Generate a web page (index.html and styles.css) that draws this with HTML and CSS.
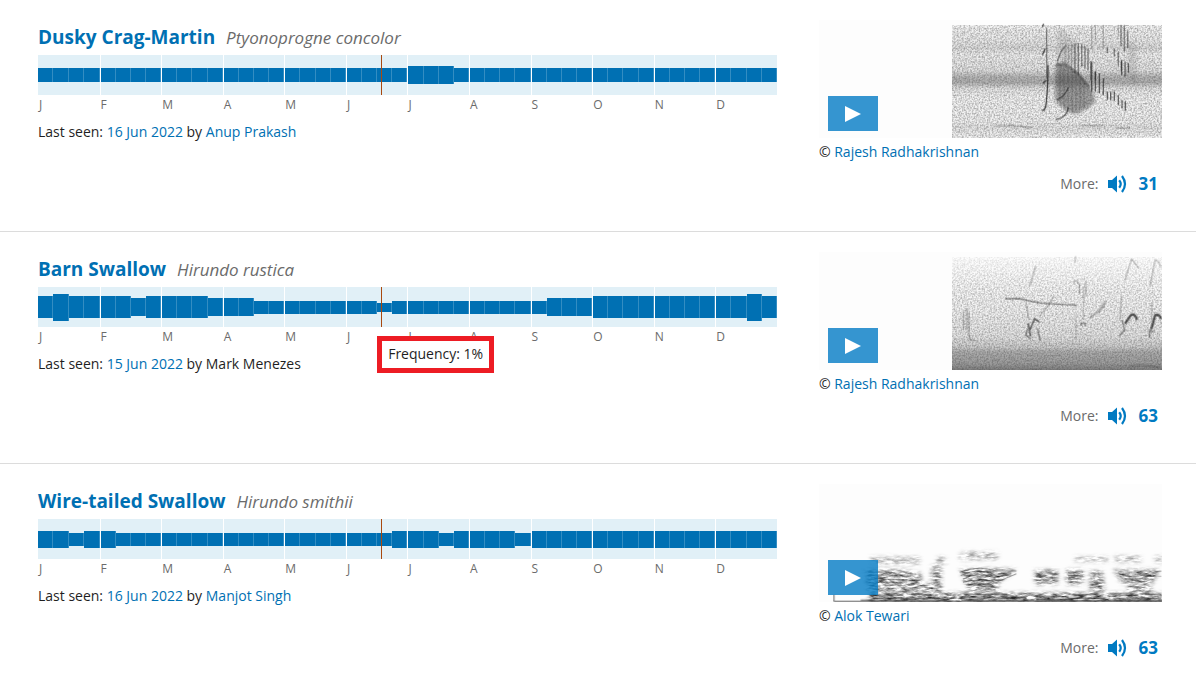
FILE: index.html
```html
<!DOCTYPE html>
<html lang="en">
<head>
<meta charset="utf-8">
<meta name="viewport" content="width=device-width, initial-scale=1">
<title>Swallows</title>
<link rel="stylesheet" href="styles.css">
</head>
<body>
<svg class="defs" width="0" height="0" aria-hidden="true">
  <defs>
    <filter id="grain" x="0" y="0" width="100%" height="100%" color-interpolation-filters="sRGB">
      <feTurbulence type="fractalNoise" baseFrequency="0.6" numOctaves="2" seed="4"/>
      <feColorMatrix values="0 0 0 0 .25  0 0 0 0 .25  0 0 0 0 .25  .9 0 0 0 -.31"/>
      <feComposite operator="in" in2="SourceGraphic"/>
    </filter>
    <filter id="streak" x="0" y="0" width="343" height="118" filterUnits="userSpaceOnUse" color-interpolation-filters="sRGB">
      <feGaussianBlur in="SourceGraphic" stdDeviation="2" result="shape"/>
      <feTurbulence type="fractalNoise" baseFrequency="0.12 0.45" numOctaves="3" seed="9"/>
      <feColorMatrix values="0 0 0 0 .15  0 0 0 0 .15  0 0 0 0 .15  2 0 0 0 -.6"/>
      <feComposite operator="in" in2="shape"/>
    </filter>
    <filter id="soft"><feGaussianBlur stdDeviation="4"/></filter>
    <filter id="trace"><feGaussianBlur stdDeviation="1.2"/></filter>
    <linearGradient id="bands" x1="0" y1="0" x2="0" y2="1">
      <stop offset="0" stop-opacity=".03"/>
      <stop offset=".15" stop-opacity=".08"/>
      <stop offset=".2" stop-opacity=".13"/>
      <stop offset=".26" stop-opacity=".06"/>
      <stop offset=".4" stop-opacity=".1"/>
      <stop offset=".46" stop-opacity=".28"/>
      <stop offset=".51" stop-opacity=".3"/>
      <stop offset=".56" stop-opacity=".1"/>
      <stop offset=".64" stop-opacity=".04"/>
      <stop offset=".86" stop-opacity=".05"/>
      <stop offset=".9" stop-opacity=".1"/>
      <stop offset="1" stop-opacity=".03"/>
    </linearGradient>
    <linearGradient id="floor" x1="0" y1="0" x2="0" y2="1">
      <stop offset="0" stop-opacity="0"/>
      <stop offset=".5" stop-opacity=".05"/>
      <stop offset=".7" stop-opacity=".1"/>
      <stop offset=".8" stop-opacity=".2"/>
      <stop offset=".84" stop-opacity=".32"/>
      <stop offset=".94" stop-opacity=".38"/>
      <stop offset="1" stop-opacity=".5"/>
    </linearGradient>
    <linearGradient id="fade" x1="0" y1="0" x2="0" y2="1">
      <stop offset="0" stop-opacity=".3"/>
      <stop offset=".3" stop-opacity=".85"/>
      <stop offset="1" stop-opacity="1"/>
    </linearGradient>
    <symbol id="speaker" viewBox="0 0 20 20">
      <path d="M1 6h4l5-4.500v17L5 14H1z" fill="currentColor"/>
      <path d="M12.200 6.200q3 3.800 0 7.600M15 2q6 8 0 16" fill="none" stroke="currentColor" stroke-width="2.200"/>
    </symbol>
  </defs>
</svg>

<main>
<ul class="species-list">
  <li class="species">
    <div class="details">
      <h2 class="name"><a href="#dusky">Dusky Crag-Martin</a> <em>Ptyonoprogne concolor</em></h2>
      <div class="chart" data-weeks="14*24 18*3 14*21"></div>
      <p class="seen">Last seen: <a href="#c1">16 Jun 2022</a> by <a href="#u1">Anup Prakash</a></p>
    </div>
    <div class="media">
      <div class="clip">
        <svg class="spectrogram" viewBox="0 0 343 118" aria-hidden="true">
          <rect width="343" height="118" fill="#fdfdfd"/>
          <rect x="133" y="5" width="210" height="113" fill="url(#bands)"/>
          <rect x="133" y="5" width="210" height="113" filter="url(#grain)"/>
          <g transform="translate(131 0) scale(.3333)" fill="none" stroke="#222" stroke-width="4" filter="url(#trace)">
            <path filter="url(#soft)" d="M317 130h30l40 32 38 45 12 38-32 25-30 12-30-12-30-30z" fill="#333" stroke="none" opacity=".42"/>
            <path filter="url(#soft)" d="M322 20v115h60V70L340 30zM535 60v110l25 30V80z" fill="#555" stroke="none" opacity=".15"/>
            <path d="M318 134h30l36 28 34 40" stroke-width="9" opacity=".3"/>
            <path d="M290 24v150" opacity=".5"/>
            <path d="M294 135q0 60-5 110-2 30-14 25M277 104l9-18M278 190l12-10M277 20l4-8" opacity=".8"/>
            <path d="M317 300q34-8 38-38M320 240q26-12 35-38" opacity=".65"/>
            <path d="M322 125q8-32 26-50" opacity=".45"/>
            <path d="M330 140v120M342 140v130M354 145v130M366 155v120M378 165v105M390 175v90M402 190v75" opacity=".2"/>
            <path d="M345 80v50M355 75v55M365 72v80M425 15v70M436 15v45M460 15v70M505 15v35" opacity=".25"/>
            <path d="M375 70v90M385 70v95M395 72v68M405 80v65M414 85v65M505 95v45M513 15v65M523 15v80M533 30v55M472 82v18M493 85v25" opacity=".5"/>
            <path d="M425 125v90M436 155v60M448 160v60M460 175v50M472 215v25M482 215v25M493 215v28M505 225v30M516 240v25M526 243v29M515 120v45M525 125v45M535 130v28" opacity=".68"/>
            <path d="M422 125v55M436 153v28M514 123v30" opacity=".5"/>
            <path d="M135 317h40l12-3M188 315l12 5 15-2 10 3h20M390 316h70M500 324h40" stroke-width="3" opacity=".35"/>
          </g>
        </svg>
        <button class="play" type="button" aria-label="Play recording"><svg viewBox="0 0 16 16"><path d="M0 0l16 8-16 8z"/></svg></button>
      </div>
      <p class="credit">© <a href="#p1">Rajesh Radhakrishnan</a></p>
      <p class="more">More: <a href="#m1"><svg class="speaker"><use href="#speaker"/></svg>31</a></p>
    </div>
  </li>

  <li class="species">
    <div class="details">
      <h2 class="name"><a href="#barn">Barn Swallow</a> <em>Hirundo rustica</em></h2>
      <div class="chart" data-weeks="22 27 22*4 18 22*4 18*3 13*8 9 13*10 18*3 22*10 27 22"><div class="tooltip" role="tooltip">Frequency: 1%</div></div>
      <p class="seen">Last seen: <a href="#c2">15 Jun 2022</a> by Mark Menezes</p>
    </div>
    <div class="media">
      <div class="clip">
        <svg class="spectrogram" viewBox="0 0 343 118" aria-hidden="true">
          <rect width="343" height="118" fill="#fdfdfd"/>
          <rect x="133" y="5" width="210" height="113" fill="url(#floor)"/>
          <rect x="133" y="5" width="210" height="113" fill="url(#fade)" filter="url(#grain)"/>
          <g transform="translate(131 1) scale(.3333)" fill="none" stroke="#222" stroke-width="4" stroke-linejoin="round" filter="url(#trace)">
            <path d="M165 137h45q30 8 70 14l100 6" opacity=".5"/>
            <path d="M268 190l30-37 15-28M257 38l-18 62M525 80l20-62 22 28M600 100l15-78q8-5 18 20M228 150l8 50M377 10l-3 20M515 130l-5 70M605 150v50" stroke-width="3" opacity=".35"/>
            <path d="M418 196l30-24 20-28M445 178l18-20" stroke-width="6" opacity=".3"/>
            <path d="M238 235l16-38 14 10M234 210l8 40" stroke-width="5" opacity=".65"/>
            <path d="M525 212l18-26q5-5 13 3 4 4 4 12M604 228l11-40q4-6 13 0 4 4 5 10" stroke-width="7" opacity=".75"/>
            <path d="M262 225l9 38M232 228l-4 18 14 12M508 250l16-20-8-28M599 255v-25l12 8M394 218v-8h12v10" opacity=".5"/>
            <path d="M40 175v55M50 165v65M56 180v60l4 20 12 2M368 90l10-8 8 12M388 90v35M407 85v45" opacity=".3"/>
            <path d="M400 100v100M378 180v80M130 322h18M540 338h60l30 6" opacity=".2"/>
          </g>
        </svg>
        <button class="play" type="button" aria-label="Play recording"><svg viewBox="0 0 16 16"><path d="M0 0l16 8-16 8z"/></svg></button>
      </div>
      <p class="credit">© <a href="#p2">Rajesh Radhakrishnan</a></p>
      <p class="more">More: <a href="#m2"><svg class="speaker"><use href="#speaker"/></svg>63</a></p>
    </div>
  </li>

  <li class="species">
    <div class="details">
      <h2 class="name"><a href="#wire">Wire-tailed Swallow</a> <em>Hirundo smithii</em></h2>
      <div class="chart" data-weeks="17*2 13 17*2 13*18 17*3 13 17*4 13 17*16"></div>
      <p class="seen">Last seen: <a href="#c3">16 Jun 2022</a> by <a href="#u3">Manjot Singh</a></p>
    </div>
    <div class="media">
      <div class="clip">
        <svg class="spectrogram" viewBox="0 0 343 118" aria-hidden="true">
          <rect width="343" height="118" fill="#fdfdfd"/>
          <g filter="url(#streak)">
            <g transform="translate(-1 59) scale(.3333)">
              <path d="M155 42h150v22H165zM355 42h30v22h-30zM425 28h115v22H425zM770 42h100v14H770zM890 40h80v18h-80zM1010 40h22v20h-22z" opacity=".5"/>
              <path d="M140 82h120l50 10v30H200l60 20H150zM340 70h30v60h-30zM425 78h170l-60 50h-90zM650 82h70v42h-70zM745 80h50v44h-50zM815 85h40v50h-40zM885 80h140l-20 40H910z" opacity=".9"/>
              <path d="M240 122h130v25H160zM450 125h90v22h-90zM820 120h40v25h-40zM930 125h70v22h-70z" opacity=".9"/>
            </g>
          </g>
          <g filter="url(#streak)">
            <path d="M50 109h293v9H50z"/>
          </g>
          <g transform="translate(-1 59) scale(.3333)" fill="none" stroke="#222" stroke-width="3" filter="url(#trace)">
            <path d="M425 88q55-22 110-4h60M428 98q50-24 100-4l50-4M435 108q45-24 90-4l55-12M435 118q50-14 100 0l60-26M445 126q50-8 80 2" opacity=".45"/>
            <path d="M150 88h70l30 8M155 98h70M155 108h55l20 12M655 92h60M655 102h50M750 88h45M750 98h45M750 108h40M900 90q40 20 100-4M905 102q50 16 95-6M910 114q40 10 90-4M1010 85h20M1005 100h25" opacity=".35"/>
            <path d="M48 155v20" opacity=".7"/>
            <path d="M48 175h984" stroke-width="4" opacity=".65"/>
            <path d="M155 156h100M280 154h60M165 166h215M438 154h130M425 164h200M665 160h60M655 168h110M765 154h70M750 165h110M900 156h60M980 154h50M885 166h145" stroke-width="4" opacity=".6"/>
            <path d="M128 171h255M430 171h220M655 172h210M885 172h148" stroke-width="4" opacity=".5"/>
          </g>
        </svg>
        <button class="play" type="button" aria-label="Play recording"><svg viewBox="0 0 16 16"><path d="M0 0l16 8-16 8z"/></svg></button>
      </div>
      <p class="credit">© <a href="#p3">Alok Tewari</a></p>
      <p class="more">More: <a href="#m3"><svg class="speaker"><use href="#speaker"/></svg>63</a></p>
    </div>
  </li>
</ul>
</main>
<script src="charts.js"></script>
</body>
</html>
```
FILE: styles.css
```css
* { box-sizing: border-box; }

body {
  margin: 0;
  background: #fff;
  color: #1f1f1f;
  font: 14px/20px "Open Sans", "Noto Sans", sans-serif;
}

a { color: #0070b3; text-decoration: none; }
a:hover { text-decoration: underline; }
p, h2 { margin: 0; }

.defs { position: absolute; }

.species-list { margin: 0; padding: 0; list-style: none; }

.species {
  display: grid;
  grid-template-columns: minmax(0, 28fr) minmax(0, 13fr);
  column-gap: 42px;
  padding: 20px 34px 37px 38px;
  border-bottom: 1px solid #dcdcdc;
}
.species:last-child { border-bottom: 0; }

.name {
  padding: 3px 0;
  font-size: 19px;
  line-height: 28px;
  font-weight: 700;
}
.name em {
  margin-left: 6px;
  color: #6b6b6b;
  font-size: 17px;
  font-weight: 400;
}

.chart {
  position: relative;
  display: grid;
  grid-template-columns: repeat(12, minmax(0, 1fr));
}
.weeks {
  display: grid;
  grid-template-columns: repeat(4, minmax(0, 1fr));
  align-items: center;
  height: 40px;
  background: #e1f0f7;
}
.month + .month .weeks { border-left: 1px solid #fff; }
.week { background: #0070b3; border-right: 1px solid #338dc2; }
.month-label {
  display: block;
  padding-left: 1px;
  color: #6b6b6b;
  font-size: 12px;
  line-height: 20px;
}
.today {
  position: absolute;
  top: 0;
  left: 46.4%;
  width: 1px;
  height: 40px;
  background: #a9490f;
}
.tooltip {
  position: absolute;
  z-index: 1;
  top: 49px;
  left: 45.9%;
  padding: 3px 6px 4px;
  border: 5px solid #ed1c24;
  background: #fff;
  white-space: nowrap;
}

.seen { margin-top: 7px; }

.clip { position: relative; }
.spectrogram { display: block; width: 100%; }
.play {
  position: absolute;
  left: 9px;
  bottom: 7px;
  display: grid;
  place-items: center;
  width: 50px;
  height: 35px;
  padding: 0;
  border: 0;
  background: rgba(2, 123, 196, 0.8);
  cursor: pointer;
}
.play svg { width: 16px; height: 16px; fill: #fff; }

.credit { margin-top: 4px; }
.more {
  display: flex;
  justify-content: flex-end;
  align-items: center;
  gap: 8px;
  margin-top: 12px;
  padding-right: 4px;
  color: #6b6b6b;
}
.more a {
  display: flex;
  align-items: center;
  gap: 12px;
  font-size: 17px;
  font-weight: 700;
  color: #007ac2;
}
.speaker { width: 20px; height: 20px; }
```
FILE: charts.js
```js
const MONTHS = "JFMAMJJASOND";

// "14*3 18" becomes [14, 14, 14, 18]
function parseWeeks(text) {
  return text.split(" ").flatMap((part) => {
    const [height, count = 1] = part.split("*").map(Number);
    return Array(count).fill(height);
  });
}

document.querySelectorAll(".chart").forEach((chart) => {
  const weeks = parseWeeks(chart.dataset.weeks);
  [...MONTHS].forEach((letter, m) => {
    const bars = weeks
      .slice(m * 4, m * 4 + 4)
      .map((h) => `<span class="week" style="height:${h}px"></span>`)
      .join("");
    chart.insertAdjacentHTML(
      "beforeend",
      `<div class="month"><div class="weeks">${bars}</div><span class="month-label">${letter}</span></div>`
    );
  });
  chart.insertAdjacentHTML("beforeend", '<span class="today"></span>');
});
```
